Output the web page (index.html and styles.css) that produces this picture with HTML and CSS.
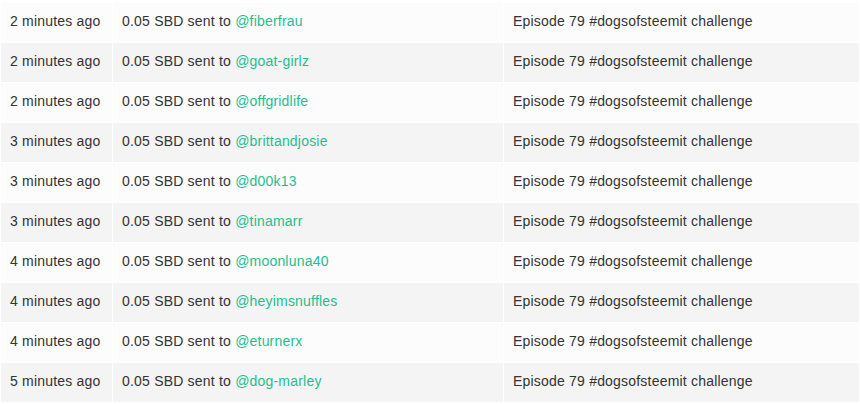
FILE: index.html
```html
<!DOCTYPE html>
<html lang="en">
<head>
  <meta charset="UTF-8">
  <title>Transfers</title>
  <link rel="stylesheet" href="styles.css">
</head>
<body>

<table class="transfers">
  <colgroup>
    <col class="col-time">
    <col class="col-amount">
    <col class="col-memo">
  </colgroup>
  <tbody>
    <tr>
      <td>2 minutes ago</td>
      <td>0.05 SBD sent to <a href="#">@fiberfrau</a></td>
      <td>Episode 79 #dogsofsteemit challenge</td>
    </tr>
    <tr>
      <td>2 minutes ago</td>
      <td>0.05 SBD sent to <a href="#">@goat-girlz</a></td>
      <td>Episode 79 #dogsofsteemit challenge</td>
    </tr>
    <tr>
      <td>2 minutes ago</td>
      <td>0.05 SBD sent to <a href="#">@offgridlife</a></td>
      <td>Episode 79 #dogsofsteemit challenge</td>
    </tr>
    <tr>
      <td>3 minutes ago</td>
      <td>0.05 SBD sent to <a href="#">@brittandjosie</a></td>
      <td>Episode 79 #dogsofsteemit challenge</td>
    </tr>
    <tr>
      <td>3 minutes ago</td>
      <td>0.05 SBD sent to <a href="#">@d00k13</a></td>
      <td>Episode 79 #dogsofsteemit challenge</td>
    </tr>
    <tr>
      <td>3 minutes ago</td>
      <td>0.05 SBD sent to <a href="#">@tinamarr</a></td>
      <td>Episode 79 #dogsofsteemit challenge</td>
    </tr>
    <tr>
      <td>4 minutes ago</td>
      <td>0.05 SBD sent to <a href="#">@moonluna40</a></td>
      <td>Episode 79 #dogsofsteemit challenge</td>
    </tr>
    <tr>
      <td>4 minutes ago</td>
      <td>0.05 SBD sent to <a href="#">@heyimsnuffles</a></td>
      <td>Episode 79 #dogsofsteemit challenge</td>
    </tr>
    <tr>
      <td>4 minutes ago</td>
      <td>0.05 SBD sent to <a href="#">@eturnerx</a></td>
      <td>Episode 79 #dogsofsteemit challenge</td>
    </tr>
    <tr>
      <td>5 minutes ago</td>
      <td>0.05 SBD sent to <a href="#">@dog-marley</a></td>
      <td>Episode 79 #dogsofsteemit challenge</td>
    </tr>
  </tbody>
</table>

</body>
</html>
```

FILE: styles.css
```css
body {
  background-color: #ffffff;
  color: #333333;
  margin: 0;
  padding: 2px 0 0 0;
  font-family: "Liberation Sans", Arial, sans-serif;
  font-size: 14px;
}

.transfers {
  width: 100%;
  border-collapse: collapse;
  table-layout: fixed;
}

.col-time {
  width: 112px;
}

.col-amount {
  width: 391px;
}

.transfers td {
  border: 1px solid #ffffff;
  padding: 9px 9px 11px 9px;
  line-height: 19px;
  letter-spacing: 0.2px;
  white-space: nowrap;
}

.transfers tr:nth-child(odd) td {
  background: #fcfcfc;
}

.transfers tr:nth-child(even) td {
  background: #f4f4f4;
}

.transfers a {
  color: #1fbf8f;
  text-decoration: none;
}
```
